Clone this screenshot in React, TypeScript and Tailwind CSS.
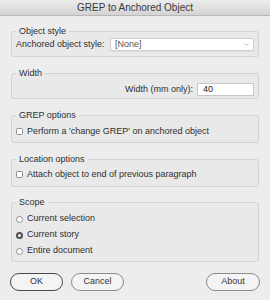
import { ChevronDown } from 'lucide-react';

const font = { fontFamily: '"Liberation Sans", Arial, sans-serif' };

function Group({ title, children, className }: { title: string; children: React.ReactNode; className?: string }) {
  return (
    <fieldset
      className={`mx-[11px] rounded-[3px] border border-[#d2d2d2] bg-[#e9e9e9] px-[4px] ${className ?? ''}`}
    >
      <legend className="px-[3px] text-[9px] leading-[11px] text-[#2f2f2f]">{title}</legend>
      {children}
    </fieldset>
  );
}

function Checkbox({ label }: { label: string }) {
  return (
    <div className="flex h-[13px] items-center gap-[4px]">
      <span className="h-[7px] w-[7px] rounded-[1.5px] border border-[#8e8e8e] bg-white" />
      <span>{label}</span>
    </div>
  );
}

function Radio({ label, checked }: { label: string; checked?: boolean }) {
  return (
    <div className="flex h-[16px] items-center gap-[4px]">
      {checked ? (
        <span className="flex h-[7px] w-[7px] items-center justify-center rounded-full bg-[#4d4d4d]">
          <span className="h-[3px] w-[3px] rounded-full bg-white" />
        </span>
      ) : (
        <span className="h-[7px] w-[7px] rounded-full border border-[#8e8e8e] bg-white" />
      )}
      <span>{label}</span>
    </div>
  );
}

export default function App() {
  return (
    <div className="h-[300px] w-[270px] overflow-hidden bg-[#ededed] text-[9px] text-[#2f2f2f]" style={font}>
      {/* Title bar */}
      <div className="flex h-[16px] items-center justify-center border-b border-[#b8b8b8] bg-gradient-to-b from-[#ececec] to-[#d4d4d4] text-[10px] text-[#3a3a3a]">
        GREP to Anchored Object
      </div>

      <div className="flex flex-col pt-[10px]">
        <Group title="Object style" className="pb-[4px] pt-[1px]">
          <div className="flex items-center">
            <span>Anchored object style:</span>
            <div className="ml-auto flex h-[13px] w-[144px] items-center justify-between rounded-[2px] border border-[#cfcfcf] bg-white pl-[4px] pr-[3px] text-[#555] shadow-[0_1px_0_rgba(0,0,0,0.06)]">
              <span>[None]</span>
              <ChevronDown className="h-[7px] w-[7px] text-[#888]" strokeWidth={2} />
            </div>
          </div>
        </Group>

        <Group title="Width" className="mt-[11px] pb-[2px] pt-[4px]">
          <div className="flex items-center justify-end gap-[4px]">
            <span>Width (mm only):</span>
            <div className="flex h-[13px] w-[57px] items-center border border-[#c8c8c8] bg-white pl-[5px] text-[#222]">
              40
            </div>
          </div>
        </Group>

        <Group title="GREP options" className="mt-[11px] pb-[4px] pt-[4px]">
          <Checkbox label="Perform a 'change GREP' on anchored object" />
        </Group>

        <Group title="Location options" className="mt-[11px] pb-[5px] pt-[3px]">
          <Checkbox label="Attach object to end of previous paragraph" />
        </Group>

        <Group title="Scope" className="mt-[10px] pb-[2px] pt-[3px]">
          <Radio label="Current selection" />
          <Radio label="Current story" checked />
          <Radio label="Entire document" />
        </Group>
      </div>

      {/* Buttons */}
      <div className="mt-[11px] flex items-center px-[10px]">
        <button className="h-[18px] w-[53px] rounded-full border border-[#4a4a4a] bg-[#f4f4f4] text-[9px] text-[#333]">
          OK
        </button>
        <button className="ml-[8px] h-[18px] w-[53px] rounded-full border border-[#8c8c8c] bg-[#f4f4f4] text-[9px] text-[#333]">
          Cancel
        </button>
        <button className="ml-auto h-[18px] w-[54px] rounded-full border border-[#8c8c8c] bg-[#f4f4f4] text-[9px] text-[#333]">
          About
        </button>
      </div>
    </div>
  );
}
